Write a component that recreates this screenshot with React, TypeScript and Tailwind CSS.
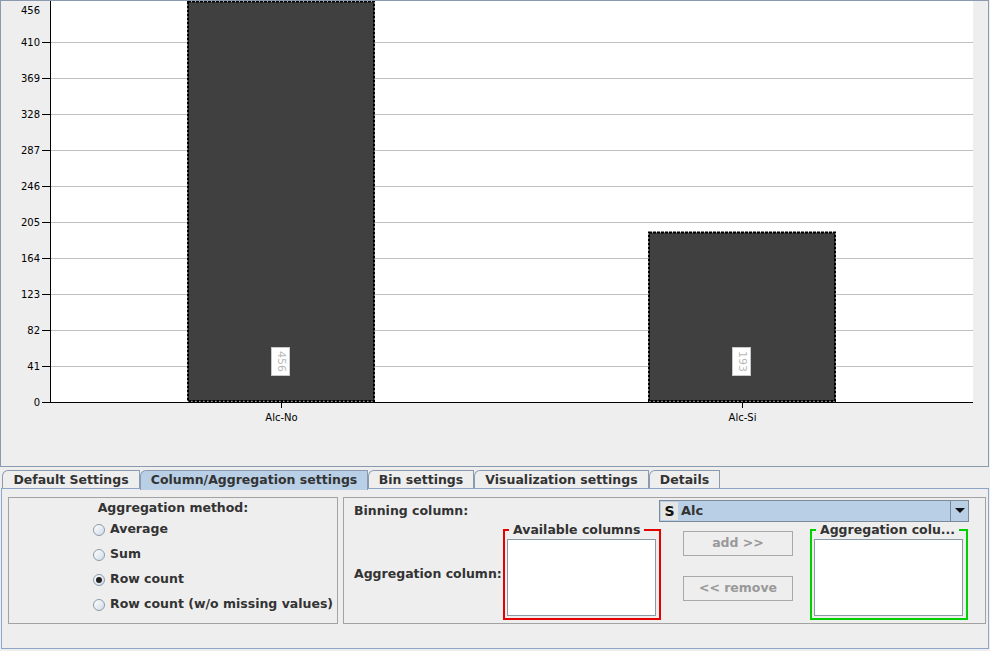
import React from "react";

const TICKS = [0, 41, 82, 123, 164, 205, 246, 287, 328, 369, 410];
const yOf = (v: number) => 402 - (v * 36) / 41;

const BARS = [
  { label: "Alc-No", value: 456, x: 187 },
  { label: "Alc-Si", value: 193, x: 648 },
];

const FONT = "DejaVu Sans, sans-serif";

const Chart: React.FC = () => (
  <svg width={987} height={465} viewBox="1 1 987 465" className="block" fontWeight="normal" fontFamily={FONT}>
    <rect x={51} y={1} width={922} height={401} fill="#ffffff" />
    {TICKS.map((v) => (
      <g key={v}>
        {v > 0 && (
          <line x1={51} x2={973} y1={yOf(v) + 0.5} y2={yOf(v) + 0.5} stroke="#c0c0c0" />
        )}
        <line x1={42} x2={50} y1={yOf(v) + 0.5} y2={yOf(v) + 0.5} stroke="#000" />
        <text x={40} y={yOf(v) + 3.5} fontSize={10} textAnchor="end" fill="#000">
          {v}
        </text>
      </g>
    ))}
    <text x={40} y={13.5} fontSize={10} textAnchor="end" fill="#000">
      456
    </text>
    {BARS.map((b) => {
      const top = yOf(b.value);
      const cx = b.x + 94;
      return (
        <g key={b.label}>
          <rect
            x={b.x + 1}
            y={Math.max(top, 1)}
            width={186}
            height={401 - Math.max(top, 1)}
            fill="#404040"
            stroke="#000"
            strokeWidth={2}
            strokeDasharray="3 1"
          />
          <rect x={cx - 9.5} y={347.5} width={18} height={28} fill="#ffffff" stroke="#c8c8c8" />
          <text
            x={cx}
            y={361.5}
            fontSize={11}
            textAnchor="middle"
            dominantBaseline="central"
            fill="#b8b8b8"
            transform={`rotate(90 ${cx} 361.5)`}
          >
            {b.value}
          </text>
          <line x1={cx + 0.5} x2={cx + 0.5} y1={402} y2={408} stroke="#000" />
          <text x={cx + 0.5} y={421} fontSize={10} textAnchor="middle" fill="#000">
            {b.label}
          </text>
        </g>
      );
    })}
    <line x1={50.5} x2={50.5} y1={1} y2={403} stroke="#000" />
    <line x1={50} x2={973} y1={402.5} y2={402.5} stroke="#000" />
  </svg>
);

const TABS = [
  { name: "Default Settings", w: "w-[138px]" },
  { name: "Column/Aggregation settings", w: "w-[228px]", active: true },
  { name: "Bin settings", w: "w-[106px]" },
  { name: "Visualization settings", w: "w-[175px]" },
  { name: "Details", w: "w-[71px]" },
];

const Radio: React.FC<{ label: string; checked?: boolean }> = ({ label, checked }) => (
  <div className="flex h-[25px] items-center">
    <span className="flex h-[12px] w-[12px] items-center justify-center rounded-full border border-[#8e9aa8] bg-gradient-to-br from-[#ffffff] to-[#cfdbe8]">
      {checked && <span className="h-[6px] w-[6px] rounded-full bg-[#222]" />}
    </span>
    <span className="ml-[5px]">{label}</span>
  </div>
);

const TitledList: React.FC<{ title: string; color: string }> = ({ title, color }) => (
  <fieldset className={`w-[158px] border-2 ${color} pb-[2px] pl-[2px] pr-[3px]`}>
    <legend className="ml-[2px] whitespace-nowrap px-[4px] leading-[15px]">{title}</legend>
    <div className="mt-[2px] h-[77px] w-[149px] border border-[#8a99a8] bg-white" />
  </fieldset>
);

const DisabledButton: React.FC<{ label: string }> = ({ label }) => (
  <div className="flex h-[25px] w-[110px] items-center justify-center border border-[#a8a8a8] text-[#999999]">
    {label}
  </div>
);

export default function App() {
  return (
    <div className="h-[651px] w-[990px] overflow-hidden bg-[#eeeeee] font-['DejaVu_Sans',sans-serif] text-[12.5px] font-bold text-[#333333]">
      <div className="h-[467px] w-[989px] border border-[#8a9bb0]">
        <Chart />
      </div>

      <div className="mt-[3px] flex h-[18px] items-end pl-[2px]">
        {TABS.map((t) => (
          <div
            key={t.name}
            className={`flex items-center justify-center rounded-tl-[6px] border-l border-r border-t border-[#8a9bb0] pt-[1px] ${t.w} ${
              t.active ? "relative z-10 -mb-[2px] h-[20px] bg-[#b8cfe5] pb-[2px]" : "h-[18px]"
            }`}
          >
            {t.name}
          </div>
        ))}
      </div>

      <div className="ml-[1px] flex h-[161px] w-[988px] gap-[5px] border border-[#8ca5c9] pl-[6px] pr-[2px] pt-[8px]">
        <div className="h-[127px] w-[330px] border border-[#a3a3a3] pt-[1px]">
          <div className="text-center leading-[17px]">Aggregation method:</div>
          <div className="pl-[84px] pt-[1px]">
            <Radio label="Average" />
            <Radio label="Sum" />
            <Radio label="Row count" checked />
            <Radio label="Row count (w/o missing values)" />
          </div>
        </div>

        <div className="h-[127px] w-[643px] border border-[#a3a3a3]">
          <div className="flex items-center justify-between pl-[10px] pr-[16px] pt-[2px]">
            <span>Binning column:</span>
            <div className="flex h-[22px] w-[310px] items-center border border-[#7a8a99] bg-[#b8cfe5]">
              <span className="ml-[1px] flex h-[18px] w-[17px] items-center justify-center bg-[#e6e6e6] text-[14px] text-[#111]">
                S
              </span>
              <span className="ml-[3px] flex-1 text-[13px]">Alc</span>
              <span className="flex h-full w-[18px] items-center justify-center border-l border-[#7a8a99]">
                <svg width={10} height={6} viewBox="0 0 10 6">
                  <path d="M0 0 H10 L5 5 Z" fill="#111" />
                </svg>
              </span>
            </div>
          </div>

          <div className="flex items-start pl-[10px]">
            <span className="mt-[43px] w-[149px]">Aggregation column:</span>
            <TitledList title="Available columns" color="border-[#e60000]" />
            <div className="ml-[22px] mt-[9px] flex flex-col gap-[20px]">
              <DisabledButton label="add >>" />
              <DisabledButton label="<< remove" />
            </div>
            <div className="ml-[17px]">
              <TitledList title="Aggregation colu..." color="border-[#00d000]" />
            </div>
          </div>
        </div>
      </div>
    </div>
  );
}
